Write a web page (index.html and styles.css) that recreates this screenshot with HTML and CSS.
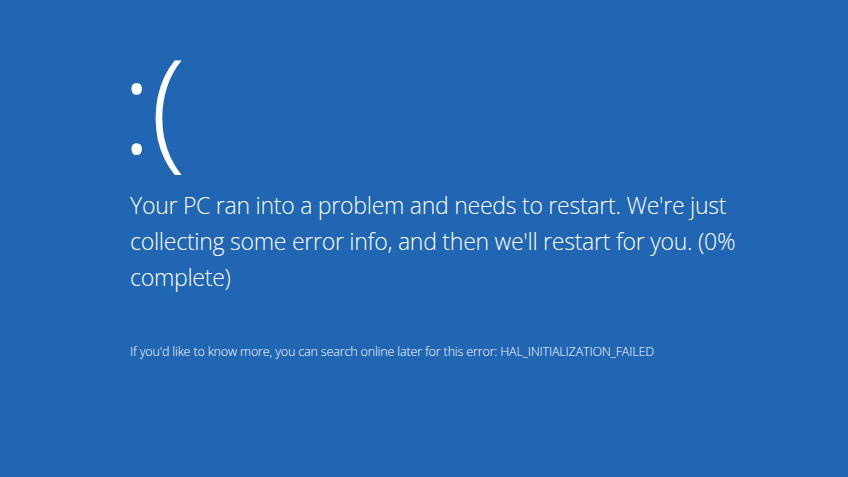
FILE: index.html
```html
<!DOCTYPE html>
<html lang="en">
<head>
  <meta charset="UTF-8" />
  <title>Your PC ran into a problem</title>
  <link rel="stylesheet" href="styles.css">
</head>
<body>
  <div class="screen">
    <div class="sad">:(</div>
    <p class="message">Your PC ran into a problem and needs to restart. We're just collecting some error info, and then we'll restart for you. (0% complete)</p>
    <p class="details">If you'd like to know more, you can search online later for this error: HAL_INITIALIZATION_FAILED</p>
  </div>
</body>
</html>
```

FILE: styles.css
```css
html, body {
  margin: 0;
  padding: 0;
  height: 100%;
}

body {
  background: #2066b3;
  color: #ffffff;
  font-family: "Open Sans", "Noto Sans", sans-serif;
  font-weight: 300;
  overflow: hidden;
}

.screen {
  padding: 28px 0 0 130px;
}

.sad {
  margin-left: -9px;
  font-size: 131px;
  line-height: 150px;
  height: 150px;
  letter-spacing: -2px;
}

.message {
  margin: 9px 0 0;
  width: 640px;
  font-size: 23px;
  line-height: 36px;
  letter-spacing: -0.25px;
}

.details {
  margin: 48px 0 0;
  font-size: 12.5px;
  letter-spacing: -0.15px;
}
```
